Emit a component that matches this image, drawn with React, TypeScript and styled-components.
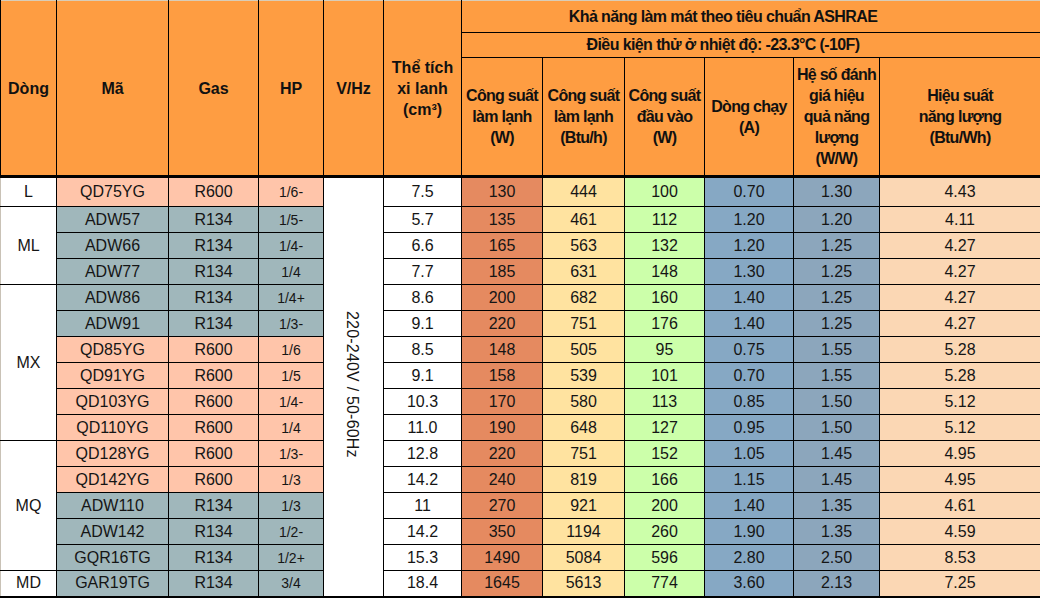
import styled, { createGlobalStyle } from "styled-components";

const GlobalStyle = createGlobalStyle`
  html, body {
    margin: 0;
    padding: 0;
    background: #ffffff;
  }
  body {
    font-family: "Liberation Sans", Arial, sans-serif;
    color: #111;
  }
`;

const Sheet = styled.table`
  width: 1040px;
  table-layout: fixed;
  border-collapse: collapse;
  font-family: "Liberation Sans", Arial, sans-serif;
  border-left: 1px solid #c9c2b6;
  border-top: 1px solid #d9cdb8;
`;

const HeadRow = styled.tr<{ $h: number }>`
  height: ${(p) => p.$h}px;
`;

const Th = styled.th<{ $thick?: boolean; $shift?: boolean; $tight?: boolean }>`
  background: #fe9d42;
  color: #111;
  font-weight: bold;
  font-size: 16px;
  letter-spacing: ${(p) => (p.$tight ? "-0.7px" : "0")};
  line-height: 21px;
  text-align: center;
  vertical-align: middle;
  white-space: nowrap;
  padding: 0 ${(p) => (p.$shift ? "56px" : "0")} 0 0;
  border: 1px solid #000;
  border-bottom: ${(p) => (p.$thick ? "3px solid #000" : "1px solid #000")};
  border-top: none;
  overflow: hidden;
`;

const Banner = styled(Th)`
  letter-spacing: -0.6px;
  line-height: 20px;
`;

const BodyRow = styled.tr<{ $h: number }>`
  height: ${(p) => p.$h}px;
  &:last-child td {
    border-bottom: 2px solid #000;
  }
`;

const tones = {
  white: "#ffffff",
  r600: "#ffc5aa",
  r134: "#a0b7bb",
  watt: "#e58a60",
  btu: "#ffe3a0",
  input: "#ccffaa",
  amp: "#86a8c4",
  cop: "#8ca6bc",
  eer: "#fbd7b4",
};

type Tone = keyof typeof tones;

const Td = styled.td<{ $tone: Tone; $small?: boolean }>`
  background: ${(p) => tones[p.$tone]};
  font-size: ${(p) => (p.$small ? "14px" : "16px")};
  line-height: 18px;
  text-align: center;
  vertical-align: middle;
  padding: 0;
  border: 1px solid #000;
  color: #151515;
  white-space: nowrap;
`;

const GroupCell = styled(Td)`
  border-left: none;
`;

const VoltCell = styled.td`
  background: #ffffff;
  border: 1px solid #000;
  border-bottom: 2px solid #000;
  text-align: center;
  vertical-align: middle;
  padding: 0 4px 0 0;
`;

const VoltText = styled.span`
  display: inline-block;
  writing-mode: vertical-rl;
  font-size: 16px;
  color: #151515;
  letter-spacing: 0.2px;
`;

type Row = {
  code: string;
  gas: "R600" | "R134";
  hp: string;
  vol: string;
  w: string;
  btu: string;
  input: string;
  amp: string;
  cop: string;
  eer: string;
};

type Group = { name: string; rows: Row[] };

const r = (
  code: string,
  gas: "R600" | "R134",
  hp: string,
  vol: string,
  w: string,
  btu: string,
  input: string,
  amp: string,
  cop: string,
  eer: string
): Row => ({ code, gas, hp, vol, w, btu, input, amp, cop, eer });

const groups: Group[] = [
  { name: "L", rows: [r("QD75YG", "R600", "1/6-", "7.5", "130", "444", "100", "0.70", "1.30", "4.43")] },
  {
    name: "ML",
    rows: [
      r("ADW57", "R134", "1/5-", "5.7", "135", "461", "112", "1.20", "1.20", "4.11"),
      r("ADW66", "R134", "1/4-", "6.6", "165", "563", "132", "1.20", "1.25", "4.27"),
      r("ADW77", "R134", "1/4", "7.7", "185", "631", "148", "1.30", "1.25", "4.27"),
    ],
  },
  {
    name: "MX",
    rows: [
      r("ADW86", "R134", "1/4+", "8.6", "200", "682", "160", "1.40", "1.25", "4.27"),
      r("ADW91", "R134", "1/3-", "9.1", "220", "751", "176", "1.40", "1.25", "4.27"),
      r("QD85YG", "R600", "1/6", "8.5", "148", "505", "95", "0.75", "1.55", "5.28"),
      r("QD91YG", "R600", "1/5", "9.1", "158", "539", "101", "0.70", "1.55", "5.28"),
      r("QD103YG", "R600", "1/4-", "10.3", "170", "580", "113", "0.85", "1.50", "5.12"),
      r("QD110YG", "R600", "1/4", "11.0", "190", "648", "127", "0.95", "1.50", "5.12"),
    ],
  },
  {
    name: "MQ",
    rows: [
      r("QD128YG", "R600", "1/3-", "12.8", "220", "751", "152", "1.05", "1.45", "4.95"),
      r("QD142YG", "R600", "1/3", "14.2", "240", "819", "166", "1.15", "1.45", "4.95"),
      r("ADW110", "R134", "1/3", "11", "270", "921", "200", "1.40", "1.35", "4.61"),
      r("ADW142", "R134", "1/2-", "14.2", "350", "1194", "260", "1.90", "1.35", "4.59"),
      r("GQR16TG", "R134", "1/2+", "15.3", "1490", "5084", "596", "2.80", "2.50", "8.53"),
    ],
  },
  { name: "MD", rows: [r("GAR19TG", "R134", "3/4", "18.4", "1645", "5613", "774", "3.60", "2.13", "7.25")] },
];

const widths = [56, 112, 90, 65, 60, 78, 81, 82, 80, 89, 86, 161];
const totalRows = groups.reduce((n, g) => n + g.rows.length, 0);

export default function App() {
  let index = 0;
  return (
    <>
      <GlobalStyle />
      <Sheet>
        <colgroup>
          {widths.map((w, i) => (
            <col key={i} style={{ width: w }} />
          ))}
        </colgroup>
        <thead>
          <HeadRow $h={32}>
            <Th rowSpan={3} $thick>Dòng</Th>
            <Th rowSpan={3} $thick>Mã</Th>
            <Th rowSpan={3} $thick>Gas</Th>
            <Th rowSpan={3} $thick>HP</Th>
            <Th rowSpan={3} $thick>V/Hz</Th>
            <Th rowSpan={3} $thick>
              Thể tích
              <br />
              xi lanh
              <br />
              (cm³)
            </Th>
            <Banner colSpan={6} $shift>Khả năng làm mát theo tiêu chuẩn ASHRAE</Banner>
          </HeadRow>
          <HeadRow $h={25}>
            <Banner colSpan={6} $shift>Điều kiện thử ở nhiệt độ: -23.3°C (-10F)</Banner>
          </HeadRow>
          <HeadRow $h={119}>
            <Th $thick $tight>
              Công suất
              <br />
              làm lạnh
              <br />
              (W)
            </Th>
            <Th $thick $tight>
              Công suất
              <br />
              làm lạnh
              <br />
              (Btu/h)
            </Th>
            <Th $thick $tight>
              Công suất
              <br />
              đầu vào
              <br />
              (W)
            </Th>
            <Th $thick $tight>
              Dòng chạy
              <br />
              (A)
            </Th>
            <Th $thick $tight>
              Hệ số đánh
              <br />
              giá hiệu
              <br />
              quả năng
              <br />
              lượng
              <br />
              (W/W)
            </Th>
            <Th $thick $tight>
              Hiệu suất
              <br />
              năng lượng
              <br />
              (Btu/Wh)
            </Th>
          </HeadRow>
        </thead>
        <tbody>
          {groups.map((g) =>
            g.rows.map((row, i) => {
              const first = index === 0;
              index += 1;
              const gasTone: Tone = row.gas === "R600" ? "r600" : "r134";
              return (
                <BodyRow key={row.code} $h={first ? 30 : 26}>
                  {i === 0 && (
                    <GroupCell $tone="white" rowSpan={g.rows.length}>
                      {g.name}
                    </GroupCell>
                  )}
                  <Td $tone={gasTone}>{row.code}</Td>
                  <Td $tone={gasTone}>{row.gas}</Td>
                  <Td $tone={gasTone} $small>
                    {row.hp}
                  </Td>
                  {first && (
                    <VoltCell rowSpan={totalRows}>
                      <VoltText>220-240V / 50-60Hz</VoltText>
                    </VoltCell>
                  )}
                  <Td $tone="white">{row.vol}</Td>
                  <Td $tone="watt">{row.w}</Td>
                  <Td $tone="btu">{row.btu}</Td>
                  <Td $tone="input">{row.input}</Td>
                  <Td $tone="amp">{row.amp}</Td>
                  <Td $tone="cop">{row.cop}</Td>
                  <Td $tone="eer">{row.eer}</Td>
                </BodyRow>
              );
            })
          )}
        </tbody>
      </Sheet>
    </>
  );
}
